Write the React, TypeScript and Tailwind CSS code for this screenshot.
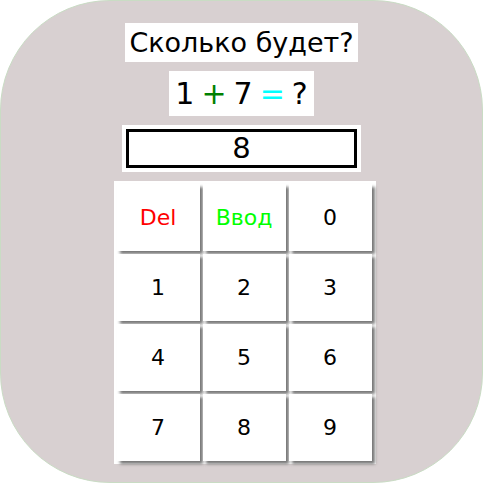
const keys: { label: string; color: string }[] = [
  { label: 'Del', color: 'text-[#ff0000]' },
  { label: 'Ввод', color: 'text-[#00ff00]' },
  { label: '0', color: 'text-black' },
  { label: '1', color: 'text-black' },
  { label: '2', color: 'text-black' },
  { label: '3', color: 'text-black' },
  { label: '4', color: 'text-black' },
  { label: '5', color: 'text-black' },
  { label: '6', color: 'text-black' },
  { label: '7', color: 'text-black' },
  { label: '8', color: 'text-black' },
  { label: '9', color: 'text-black' },
];

export default function App() {
  return (
    <div className="h-[483px] w-[483px] bg-white font-['DejaVu_Sans',sans-serif]">
      <div className="flex h-full w-full flex-col items-center rounded-[110px] border border-[#c9dcc4] bg-[#d8d0d1] pt-[22px]">
        <div className="bg-white px-[4px] text-[27px] leading-[39px] text-black">Сколько будет?</div>

        <div className="mt-[9px] flex gap-[7px] bg-white px-[6px] text-[30px] leading-[45px] text-black">
          <span>1</span>
          <span className="text-[#008000]">+</span>
          <span>7</span>
          <span className="text-[#00ffff]">=</span>
          <span>?</span>
        </div>

        <div className="mt-[9px] bg-white p-[4px]">
          <div className="flex h-[39px] w-[231px] items-center justify-center border-[3px] border-black text-[29px] text-black">
            8
          </div>
        </div>

        <div className="ml-[6px] mt-[9px] grid grid-cols-3 gap-[3px] bg-white pb-[3px] pl-[3px] pr-[4px] pt-[3px]">
          {keys.map(k => (
            <button
              key={k.label}
              className={`flex h-[67px] w-[83px] items-center justify-center bg-white text-[22px] shadow-[3px_3px_3px_#777] ${k.color}`}
            >
              {k.label}
            </button>
          ))}
        </div>
      </div>
    </div>
  );
}
